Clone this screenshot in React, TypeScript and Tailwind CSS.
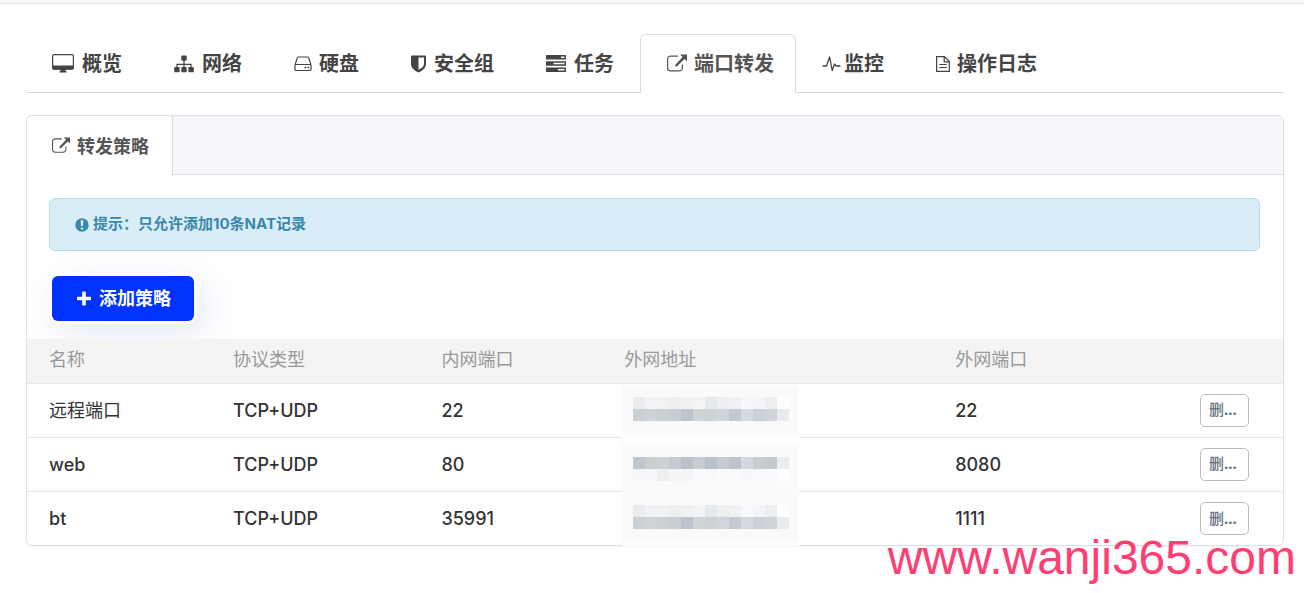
import React from "react";

type IconProps = { className?: string };

function DesktopIcon({ className }: IconProps) {
  return (
    <svg className={className} width="22" height="20" viewBox="0 0 22 20" fill="none" aria-hidden="true">
      <rect x="0.6" y="0.600" width="20.8" height="14.6" rx="1.4" stroke="currentColor" strokeWidth="1.2" />
      <path d="M0.5 11.500h21v2.7a1.4 1.4 0 0 1-1.4 1.4H1.9a1.4 1.4 0 0 1-1.4-1.4zM8.500 15.200h5v1.600l1 0.600v1.100h-7v-1.100l1-0.600z" fill="currentColor" />
    </svg>
  );
}

function SitemapIcon({ className }: IconProps) {
  return (
    <svg className={className} width="20" height="18" viewBox="0 0 20 18" fill="none" aria-hidden="true">
      <path d="M10 5v8M3 13V9.300h14V13" stroke="currentColor" strokeWidth="1.200" />
      <g fill="currentColor">
        <rect x="7.300" y="0.500" width="5.400" height="5.200" rx="1" />
        <rect x="0.200" y="12" width="5.400" height="5.200" rx="1" />
        <rect x="7.300" y="12" width="5.400" height="5.200" rx="1" />
        <rect x="14.400" y="12" width="5.400" height="5.200" rx="1" />
      </g>
    </svg>
  );
}

function DriveIcon({ className }: IconProps) {
  return (
    <svg className={className} width="18" height="16" viewBox="0 0 18 16" fill="none" aria-hidden="true">
      <path d="M1 9 3.200 2.100Q3.600 1 4.800 1h8.400q1.200 0 1.600 1.100L17 9M2 8.500h14a1 1 0 0 1 1 1v4a1 1 0 0 1-1 1H2a1 1 0 0 1-1-1v-4a1 1 0 0 1 1-1z" stroke="currentColor" strokeWidth="1.200" />
      <circle cx="11.300" cy="11.500" r="0.900" fill="currentColor" />
      <circle cx="14.100" cy="11.500" r="0.900" fill="currentColor" />
    </svg>
  );
}

function ShieldIcon({ className }: IconProps) {
  return (
    <svg className={className} width="15" height="18" viewBox="0 0 15 18" aria-hidden="true">
      <path fillRule="evenodd" d="M1 0.500h13a1 1 0 0 1 1 1V9c0 4-3.500 6.800-7.500 8.500C3.500 15.800 0 13 0 9V1.500a1 1 0 0 1 1-1zM7.500 2.500v12.300C10.500 13.300 13 11.500 13 9V2.500z" fill="currentColor" />
    </svg>
  );
}

function TasksIcon({ className }: IconProps) {
  return (
    <svg className={className} width="20" height="18" viewBox="0 0 20 18" aria-hidden="true">
      <path fillRule="evenodd" d="M0 0h20v4.500H0zM15 1.500v1.500h3.500V1.500zM0 6.200h20v4.500H0zM7.500 7.700v1.500h11V7.700zM0 12.400h20v4.500H0zM12 13.900v1.500h6.500v-1.500z" fill="currentColor" />
    </svg>
  );
}

function ShareIcon({ className }: IconProps) {
  return (
    <svg className={className} viewBox="0 0 20 20" fill="none" aria-hidden="true">
      <path d="M11 2.100H3.500A2.900 2.900 0 0 0 0.600 5v9a2.900 2.900 0 0 0 2.900 2.900h9a2.900 2.900 0 0 0 2.900-2.900v-3.500" stroke="currentColor" strokeWidth="1.200" />
      <path d="M13 0.500h7v7l-2.400-2.400-8.100 7.700-1.600-1.600 7.700-8.100z" fill="currentColor" />
    </svg>
  );
}

function TabShareIcon({ className }: IconProps) {
  return <ShareIcon className={`size-5 ${className ?? ""}`} />;
}

function PulseIcon({ className }: IconProps) {
  return (
    <svg className={className} width="19" height="17" viewBox="0 0 19 17" fill="none" aria-hidden="true">
      <path d="M0.500 11h4L7.600 2l2.600 13.500 2.300-6.500 1.500 2h4.500" stroke="currentColor" strokeWidth="1.300" strokeLinejoin="round" />
    </svg>
  );
}

function FileIcon({ className }: IconProps) {
  return (
    <svg className={className} width="14" height="16" viewBox="0 0 14 16" fill="none" aria-hidden="true">
      <path d="M0.600 0.700h7.900l4.800 4.800v9.900H0.600zM8.200 0.700v5.100h5M3.300 8.500h7.500M3.300 11.500h7.500" stroke="currentColor" strokeWidth="1.200" />
    </svg>
  );
}

function NoticeIcon({ className }: IconProps) {
  return (
    <svg className={className} viewBox="0 0 14 14" aria-hidden="true">
      <circle cx="7" cy="7" r="6.700" fill="currentColor" />
      <path d="M5.700 2.200h2.600l-0.300 5.800h-2zM5.900 9.400h2.200v2.200H5.900z" fill="#d9edf7" />
    </svg>
  );
}

function PlusIcon({ className }: IconProps) {
  return (
    <svg className={className} viewBox="0 0 16 16" aria-hidden="true">
      <path d="M7 0.500h2a0.800 0.800 0 0 1 0.800 0.800v4.400h4.400a0.800 0.800 0 0 1 0.800 0.800v2a0.800 0.800 0 0 1-0.800 0.800H9.800v4.400a0.800 0.800 0 0 1-0.800 0.800H7a0.800 0.800 0 0 1-0.800-0.800V9.300H1.800A0.800 0.800 0 0 1 1 8.500v-2a0.800 0.800 0 0 1 0.800-0.800h4.400V1.300A0.800 0.800 0 0 1 7 0.500z" fill="currentColor" />
    </svg>
  );
}

const tabs = [
  { label: "概览", Icon: DesktopIcon, gap: "gap-2" },
  { label: "网络", Icon: SitemapIcon, gap: "gap-2" },
  { label: "硬盘", Icon: DriveIcon, gap: "gap-[7px]" },
  { label: "安全组", Icon: ShieldIcon, gap: "gap-2" },
  { label: "任务", Icon: TasksIcon, gap: "gap-2" },
  { label: "端口转发", Icon: TabShareIcon, gap: "gap-[7px]", active: true },
  { label: "监控", Icon: PulseIcon, gap: "gap-[3px]" },
  { label: "操作日志", Icon: FileIcon, gap: "gap-[7px]" },
];

const lightCells = ["#ebecee", "#f1f2f5", "#f1f2f4", "#eeeff0", "#f1f2f4", "#f3f4f6", "#e5e9eb", "#eeeff1", "#f1f2f4", "#f7f8fb", "#f4f5f8", "#eeeff1", "#fcfffe"];
const darkCells = ["#cbd0d4", "#cfd3d7", "#cbd0d3", "#c9ced2", "#bec4cd", "#cfd4d7", "#cdd2d5", "#d0d5d9", "#c4c9d1", "#d5dadf", "#cbd1d6", "#d1d3da", "#ebecef"];
const midCells = ["#c0c6cf", "#cacfd2", "#cfd1d5", "#c6cbd3", "#bac1cb", "#c7ccd0", "#bbc1ca", "#c6cbcf", "#bcc3ca", "#d5d8df", "#c7ccd0", "#c5cad2", "#ebecef"];
const faintCells = ["#f6f7fb", "#f6f7f9", "#eeeff0", "#f4f5f6", "#f4f5f7", "#f9fafe", "#f7f8fa", "#f9fbfa", "#f9fbfa", "#f6f7fb", "#f9f9fb", "#f9fafe", "#fdfffe"];

const rows = [
  { name: "远程端口", type: "TCP+UDP", inner: "22", outer: "22", cells: [lightCells, darkCells], frame: "border-t-2 border-b-4 pt-[11px]" },
  { name: "web", type: "TCP+UDP", inner: "80", outer: "8080", cells: [midCells, faintCells], frame: "border-t-[7px] pt-3" },
  { name: "bt", type: "TCP+UDP", inner: "35991", outer: "1111", cells: [lightCells, darkCells], frame: "border-b-4 pt-[13px]" },
];

function MaskedAddress({ cells, frame }: { cells: string[][]; frame: string }) {
  return (
    <div className={`relative -mb-px h-[54px] w-[177px] border-[#fdfefe] bg-[#fafafa] pl-[11px] ${frame}`}>
      {cells.map((line, i) => (
        <div key={i} className="flex">
          {line.map((color, j) => (
            <span key={j} className="h-3 w-3" style={{ backgroundColor: color }} />
          ))}
        </div>
      ))}
    </div>
  );
}

export default function App() {
  return (
    <div className="min-h-screen bg-white font-['Inter','Noto_Sans_CJK_SC',sans-serif] text-[#333]">
      <div className="h-1 border-b border-[#e0e2e6] bg-[#f6f7fa]" />
      <main className="relative pl-[26px] pr-5 pt-[30px]">
        <nav className="flex h-[59px] border-b border-[#dadbdc]">
          {tabs.map(({ label, Icon, gap, active }) => (
            <a
              key={label}
              href="#"
              className={
                active
                  ? `flex h-[59px] items-center rounded-t-md border border-b-0 border-[#dadbdc] bg-white pl-[26px] pr-[21px] text-[20px] font-bold text-[#555] ${gap}`
                  : `flex h-[59px] items-center px-[26px] text-[20px] font-bold text-[#444] ${gap}`
              }
            >
              <Icon className="shrink-0" />
              {label}
            </a>
          ))}
        </nav>

        <section className="mt-[22px] rounded-md border border-[#dfe1e5] shadow-[0_1px_1px_rgba(0,0,0,0.04)]">
          <div className="flex h-[59px] rounded-t-md border-b border-[#dfe1e5] bg-[#f6f7fa]">
            <a href="#" className="flex h-[60px] items-center gap-[7px] rounded-tl-md border-r border-[#dadbdc] bg-white pl-[25px] pr-[23px] text-[18px] font-bold text-[#555]">
              <ShareIcon className="size-[18px] shrink-0" />
              转发策略
            </a>
          </div>

          <div className="pl-[22px] pr-[23px] pt-[23px]">
            <div className="flex h-[53px] items-center gap-1 rounded-md border border-[#bcdbe6] bg-[#d9edf7] px-[25px] text-[15px] font-bold text-[#3a87ad]">
              <NoticeIcon className="size-[14px] shrink-0" />
              提示：只允许添加10条NAT记录
            </div>
          </div>
          <div className="px-[25px] pb-[18px] pt-[25px]">
            <button className="flex h-[45px] items-center gap-[7px] rounded-md bg-[#0033ff] pl-6 pr-[23px] text-[18px] font-bold text-white shadow-[0_0_0_3px_#ffffff,8px_10px_35px_rgba(60,90,180,0.15)]">
              <PlusIcon className="size-4 shrink-0" />
              添加策略
            </button>
          </div>

          <table className="w-full table-fixed border-collapse text-left text-[18px]">
            <colgroup>
              <col className="w-[16.4%]" />
              <col className="w-[16.6%]" />
              <col className="w-[14.4%]" />
              <col className="w-[26.5%]" />
              <col className="w-[19.5%]" />
              <col />
            </colgroup>
            <thead>
              <tr className="h-[44px] border-b border-[#e7e8ea] bg-[#f4f4f4] text-[#999]">
                <th className="pb-0.5 pl-[22px] font-normal">名称</th>
                <th className="pb-0.5 font-normal">协议类型</th>
                <th className="pb-0.5 font-normal">内网端口</th>
                <th className="pb-0.5 pl-0.5 font-normal">外网地址</th>
                <th className="pb-0.5 font-normal">外网端口</th>
                <th aria-label="操作" />
              </tr>
            </thead>
            <tbody>
              {rows.map((row) => (
                <tr key={row.name} className="h-[54px] border-b border-[#e7e8ea] last:border-b-0">
                  <td className="pl-[22px]">
                    <span className={row.name === "远程端口" ? "font-normal" : "font-medium"}>{row.name}</span>
                  </td>
                  <td className="font-medium">{row.type}</td>
                  <td className="font-medium">{row.inner}</td>
                  <td className="p-0 align-top">
                    <MaskedAddress cells={row.cells} frame={row.frame} />
                  </td>
                  <td className="font-medium">{row.outer}</td>
                  <td>
                    <button className="block h-[33px] w-[49px] rounded-[5px] border border-[#b9bdc2] bg-white px-2 text-left text-[15px] font-medium text-[#637080]">
                      删<span className="font-['Noto_Sans',sans-serif] font-bold">...</span>
                    </button>
                  </td>
                </tr>
              ))}
            </tbody>
          </table>
        </section>

        <p className="absolute right-2 top-[526px] font-['Liberation_Sans',sans-serif] text-[48px] leading-[56px] text-[#ff3f73]">
          www.wanji365.com
        </p>
      </main>
    </div>
  );
}
